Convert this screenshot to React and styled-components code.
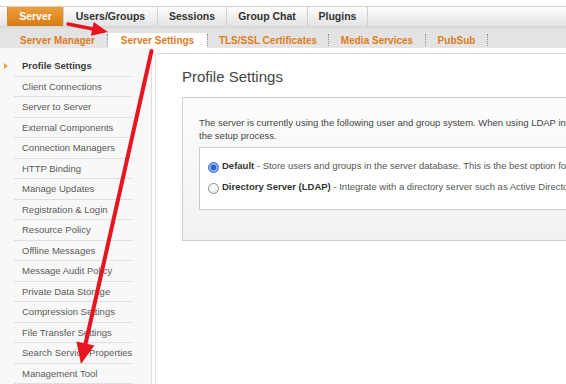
import React from 'react';
import styled, { createGlobalStyle, css } from 'styled-components';

const GlobalStyle = createGlobalStyle`
  body {
    margin: 0;
    font-family: "Liberation Sans", Arial, sans-serif;
    background: #fff;
    overflow: hidden;
  }
`;

const Page = styled.div`
  position: relative;
  width: 566px;
  height: 384px;
  overflow: hidden;
  background: #fff;
`;

const TopBar = styled.div`
  display: flex;
  height: 19px;
  margin-top: 6px;
  padding-left: 7px;
  border-top: 1px solid #cfcfcf;
  background: linear-gradient(#fdfdfd, #e3e3e3);
`;

const Tab = styled.div`
  box-sizing: border-box;
  width: ${({ w }) => w}px;
  border-left: 1px solid #d0d0d0;
  text-align: center;
  line-height: 19px;
  font-size: 10.5px;
  font-weight: bold;
  color: #333;
  white-space: nowrap;
  ${({ active }) =>
    active &&
    css`
      color: #fff;
      background: linear-gradient(#eda03e, #d67a12);
      border-left-color: #d88a2c;
    `}
`;

const TabFiller = styled.div`
  flex: 1;
  border-left: 1px solid #d0d0d0;
`;

const SubNav = styled.div`
  display: flex;
  align-items: flex-end;
  height: 22px;
  padding-left: 8px;
  background: linear-gradient(#d4d4d4 0, #e2e2e2 3px, #e5e5e5);
`;

const SubItem = styled.div`
  width: ${({ w }) => w}px;
  height: 15px;
  line-height: 15px;
  text-align: center;
  font-size: 10px;
  font-weight: bold;
  color: #e07c1a;
  white-space: nowrap;
  ${({ active }) =>
    active &&
    css`
      background: #fff;
    `}
`;

const SubSep = styled.div`
  width: 0;
  height: 12px;
  margin-bottom: 2px;
  border-left: 1px dotted #8c8c8c;
`;

const Body = styled.div`
  display: flex;
  height: 336px;
`;

const Sidebar = styled.div`
  width: 151px;
  flex-shrink: 0;
  padding-top: 8px;
  background: #f8f8f8;
  border-right: 1px solid #dedede;
`;

const SideItem = styled.div`
  position: relative;
  box-sizing: border-box;
  height: 20.5px;
  margin: 0 18px 0 14px;
  padding-left: 8px;
  border-bottom: 1px solid #e0e0e0;
  line-height: 19.5px;
  font-size: 9.5px;
  color: #5a5a5a;
  white-space: nowrap;
  ${({ active }) =>
    active &&
    css`
      font-weight: bold;
      color: #3a3a3a;
      &::before {
        content: '';
        position: absolute;
        left: -10px;
        top: 7px;
        border-left: 4px solid #e9a43c;
        border-top: 3px solid transparent;
        border-bottom: 3px solid transparent;
      }
    `}
`;

const Main = styled.div`
  flex: 1;
  margin: 5px 0 0 3px;
  padding: 14px 0 0 26px;
  border-top: 1px solid #dcdcdc;
  border-left: 1px solid #e2e2e2;
  overflow: hidden;
`;

const Title = styled.h1`
  margin: 0 0 11px;
  font-size: 15px;
  line-height: 18px;
  font-weight: normal;
  color: #444;
`;

const OuterBox = styled.div`
  width: 600px;
  padding: 18px 0 30px 16px;
  border: 1px solid #cfcfcf;
  background: linear-gradient(#fdfdfd, #f1f1f1);
`;

const Intro = styled.p`
  margin: 0;
  font-size: 9.5px;
  line-height: 13px;
  color: #444;
  white-space: nowrap;
`;

const InnerBox = styled.div`
  margin-top: 5px;
  padding: 7px 0 12px 8px;
  border: 1px solid #cccccc;
  background: #fff;
`;

const Option = styled.label`
  display: flex;
  align-items: flex-start;
  height: 21px;
  line-height: 21px;
  font-size: 9.5px;
  color: #555;
  white-space: nowrap;
  b {
    color: #333;
  }
`;

const Radio = styled.span`
  box-sizing: border-box;
  width: 11px;
  height: 11px;
  margin: 7px 3px 0 0;
  flex-shrink: 0;
  border-radius: 50%;
  border: 1px solid #8a8a8a;
  background: linear-gradient(#ffffff, #e9e9e9);
  ${({ checked }) =>
    checked &&
    css`
      border-color: #2d65c4;
      background: radial-gradient(circle, #2a62c8 0 2.3px, #7fa9ec 3px, #b9d1f5 100%);
    `}
`;

const Overlay = styled.svg`
  position: absolute;
  left: 0;
  top: 0;
  pointer-events: none;
`;

const tabs = [
  { label: 'Server', w: 56, active: true },
  { label: 'Users/Groups', w: 94 },
  { label: 'Sessions', w: 69 },
  { label: 'Group Chat', w: 81 },
  { label: 'Plugins', w: 60 },
];

const subTabs = [
  { label: 'Server Manager', w: 99 },
  { label: 'Server Settings', w: 99, active: true },
  { label: 'TLS/SSL Certificates', w: 120 },
  { label: 'Media Services', w: 96 },
  { label: 'PubSub', w: 61 },
];

const sideItems = [
  'Profile Settings',
  'Client Connections',
  'Server to Server',
  'External Components',
  'Connection Managers',
  'HTTP Binding',
  'Manage Updates',
  'Registration & Login',
  'Resource Policy',
  'Offline Messages',
  'Message Audit Policy',
  'Private Data Storage',
  'Compression Settings',
  'File Transfer Settings',
  'Search Service Properties',
  'Management Tool',
];

function Arrows() {
  return (
    <Overlay width="566" height="384" viewBox="0 0 566 384">
      <line x1="68" y1="24" x2="93" y2="29" stroke="#e8141f" strokeWidth="3.5" strokeLinecap="round" />
      <polygon points="108,32 93.7,22 90.9,35.8" fill="#e8141f" />
      <line x1="151.5" y1="51" x2="85.5" y2="344" stroke="#e8141f" strokeWidth="4" strokeLinecap="round" />
      <polygon points="81,364 94.4,345.5 76.4,341.5" fill="#e8141f" />
    </Overlay>
  );
}

export default function App() {
  return (
    <Page>
      <GlobalStyle />
      <TopBar>
        {tabs.map((t) => (
          <Tab key={t.label} w={t.w} active={t.active}>
            {t.label}
          </Tab>
        ))}
        <TabFiller />
      </TopBar>
      <SubNav>
        {subTabs.map((t) => (
          <React.Fragment key={t.label}>
            <SubItem w={t.w} active={t.active}>
              {t.label}
            </SubItem>
            <SubSep />
          </React.Fragment>
        ))}
      </SubNav>
      <Body>
        <Sidebar>
          {sideItems.map((item, i) => (
            <SideItem key={item} active={i === 0}>
              {item}
            </SideItem>
          ))}
        </Sidebar>
        <Main>
          <Title>Profile Settings</Title>
          <OuterBox>
            <Intro>
              The server is currently using the following user and group system. When using LDAP integration, settings can be changed by re-running
              <br />
              the setup process.
            </Intro>
            <InnerBox>
              <Option>
                <Radio checked />
                <span>
                  <b>Default</b> - Store users and groups in the server database. This is the best option for simple deployments.
                </span>
              </Option>
              <Option>
                <Radio />
                <span>
                  <b>Directory Server (LDAP)</b> - Integrate with a directory server such as Active Directory or OpenLDAP using the LDAP protocol.
                </span>
              </Option>
            </InnerBox>
          </OuterBox>
        </Main>
      </Body>
      <Arrows />
    </Page>
  );
}
